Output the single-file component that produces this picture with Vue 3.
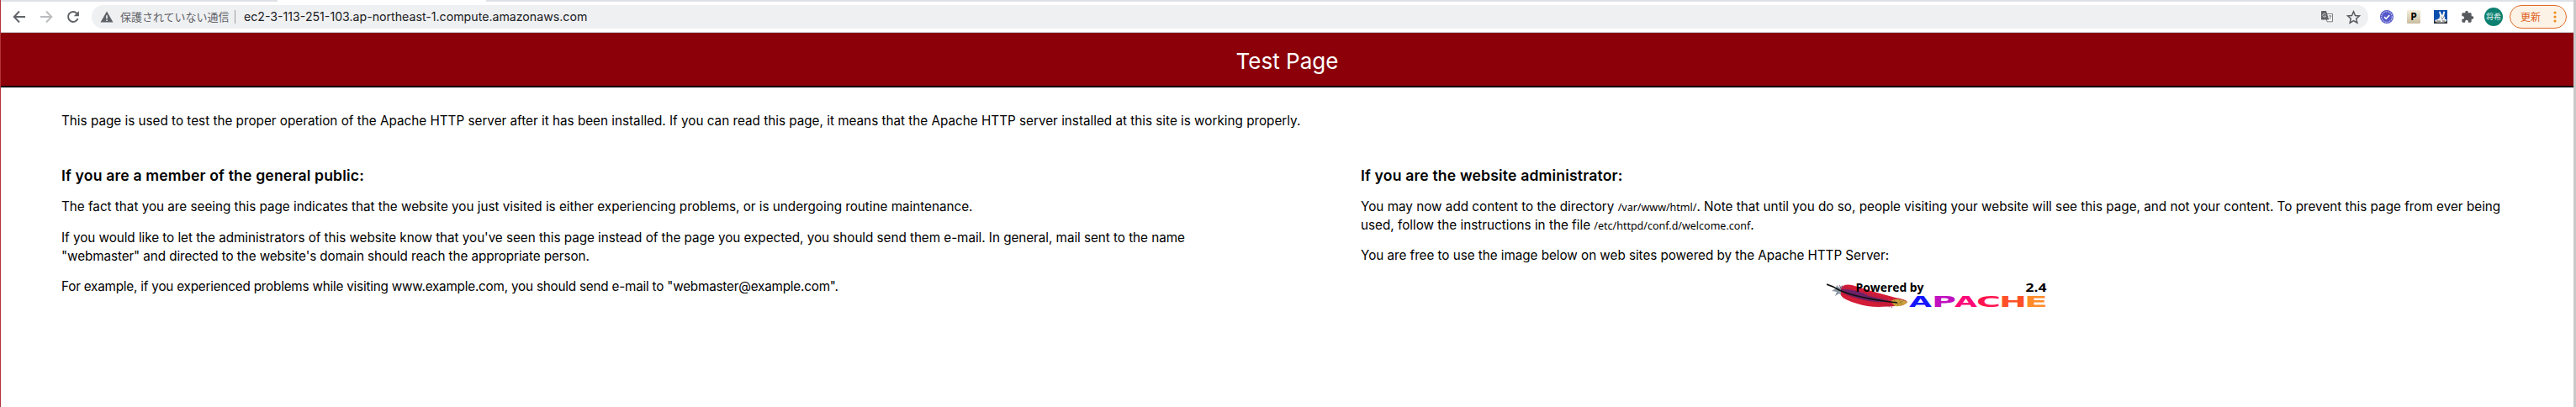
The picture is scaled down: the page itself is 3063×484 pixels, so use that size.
<script setup>
const letters = [
  { c: 'A', x: 98, w: 27, fill: '#1414ff' },
  { c: 'P', x: 125, w: 29, fill: '#c010c0' },
  { c: 'A', x: 152, w: 27, fill: '#ff0a78' },
  { c: 'C', x: 178, w: 29, fill: '#ff1450' },
  { c: 'H', x: 205, w: 33, fill: '#ff5028' },
  { c: 'E', x: 235, w: 28, fill: '#ff8c28' },
]
const barbs = Array.from({ length: 19 }, (_, i) => {
  const x = 18 + i * 3.1
  const y = 10 + i * 0.85
  return { up: `M${x} ${y}l-3 -5`, down: `M${x} ${y}l4 7` }
})
</script>

<template>
  <div class="window">
    <div class="tabs"><div class="active-tab"></div></div>
    <div class="toolbar">
      <svg class="nav" viewBox="0 0 16 16"><path d="M15 8H2M8 1.5L1.7 8L8 14.5" fill="none" stroke="#5f6368" stroke-width="1.9" /></svg>
      <svg class="nav" viewBox="0 0 16 16"><path d="M1 8h13M8 1.5L14.3 8L8 14.5" fill="none" stroke="#bbbcbe" stroke-width="1.9" /></svg>
      <svg class="nav" viewBox="0 0 16 16"><path d="M13.6 10.2A6 6 0 1 1 12.4 3.8L14 5.6" fill="none" stroke="#5f6368" stroke-width="1.9" /><path d="M14.9 1v6.2H8.7z" fill="#5f6368" /></svg>
      <div class="address">
        <svg class="warn" viewBox="0 0 16 14"><path d="M8 .5L15.5 13.5H.5z" fill="#5f6368" /><path d="M8 5.2v4M8 10.4v1.7" stroke="#eff0f2" stroke-width="1.6" /></svg>
        <span class="insecure">保護されていない通信</span>
        <i class="sep"></i>
        <span class="url">ec2-3-113-251-103.ap-northeast-1.compute.amazonaws.com</span>
        <svg class="translate" viewBox="0 0 16 16">
          <path d="M6 4.5h8.5v9.3H8z" fill="#fff" stroke="#7a7e82" stroke-width="1" />
          <path d="M1.5 1H7l3.3 10.5H1.5Q1 11.500 1 11V1.500Q1 1 1.500 1z" fill="#5f6368" />
          <path d="M6.500 5A2 2 0 1 0 6.700 7H5" fill="none" stroke="#d8dadc" stroke-width=".9" />
          <path d="M9.500 7h4M11.500 6v1M12.800 7q-.8 2.500-2.200 3.500M11 8.500q.8 1.800 2 2.800" fill="none" stroke="#6f7377" stroke-width=".8" />
        </svg>
        <svg class="star" viewBox="0 0 16 16"><path d="M8 1.700l1.900 4.400 4.700.4-3.600 3.100 1.100 4.700L8 11.800l-4.100 2.500L5 9.600 1.400 6.500l4.700-.4z" fill="none" stroke="#55595d" stroke-width="1.400" /></svg>
      </div>
      <div class="extensions">
        <svg viewBox="0 0 16 16"><circle cx="8" cy="8" r="8" fill="#5558c8" /><circle cx="8" cy="8" r="6.300" fill="none" stroke="#c5c7f3" stroke-width="1.100" stroke-dasharray="1.700 .8" /><path d="M5 8.200l2.200 2.100L11.200 6" fill="none" stroke="#fff" stroke-width="1.600" /></svg>
        <span class="p-ext">P</span>
        <svg viewBox="0 0 16 16">
          <path d="M0 0h16v16H0z" fill="#0b4fae" />
          <path d="M0 12.500h16V16H0z" fill="#30353a" />
          <path d="M7.300 7L6.100 2.500Q6.500.8 7.800 1.800L9.300 5.500 10.300 5.500 11.300 1.800Q12.800.8 13.100 2.500L12.200 7Q13.600 8.500 12.900 10.500 15.500 10.500 15.200 12.500 14.500 14.500 11.500 14.500H4.500Q1 14.300 1.500 12.300 2 11 4.200 11.300 5 9.800 6.600 10 6.200 8 7.300 7z" fill="#f2f2ef" />
          <path d="M8.500 8.200h.9M11 8.200h.9M9 10.300h2M3 13l5 .2M10 13h3.500" stroke="#333" stroke-width=".8" fill="none" />
        </svg>
        <svg viewBox="0 0 24 24"><path d="M20.500 11H19V7c0-1.100-.9-2-2-2h-4V3.500a2.500 2.500 0 0 0-5 0V5H4c-1.100 0-2 .9-2 2v3.800h1.500a2.700 2.700 0 0 1 0 5.400H2V20c0 1.100.9 2 2 2h3.800v-1.500a2.700 2.700 0 0 1 5.400 0V22H17c1.100 0 2-.9 2-2v-4h1.500a2.500 2.500 0 0 0 0-5z" fill="#55595d" /></svg>
      </div>
      <div class="avatar">将希</div>
      <div class="update"><span>更新</span><svg viewBox="0 0 4 14"><g fill="#f08a1c"><circle cx="2" cy="2" r="1.600" /><circle cx="2" cy="7" r="1.600" /><circle cx="2" cy="12" r="1.600" /></g></svg></div>
    </div>
    <header><h1>Test Page</h1></header>
    <main>
      <p class="intro">This page is used to test the proper operation of the Apache HTTP server after it has been installed. If you can read this page, it means that the Apache HTTP server installed at this site is working properly.</p>
      <div class="columns">
        <section>
          <h2>If you are a member of the general public:</h2>
          <p class="snug">The fact that you are seeing this page indicates that the website you just visited is either experiencing problems, or is undergoing routine maintenance.</p>
          <p><span class="tight">If you would like to let the administrators of this website know that you've seen this page instead of the page you expected, you should send them e-mail. In general, mail sent to the name</span><br /><span class="tighter">"webmaster" and directed to the website's domain should reach the appropriate person.</span></p>
          <p class="tightest">For example, if you experienced problems while visiting www.example.com, you should send e-mail to "webmaster@example.com".</p>
        </section>
        <section class="admin">
          <h2>If you are the website administrator:</h2>
          <p>You may now add content to the directory <code>/var/www/html/</code>. Note that until you do so, people visiting your website will see this page, and not your content. To prevent this page from ever being<br />used, follow the instructions in the file <code>/etc/httpd/conf.d/welcome.conf</code>.</p>
          <p class="tight">You are free to use the image below on web sites powered by the Apache HTTP Server:</p>
          <svg class="powered" viewBox="0 -8 264 42">
            <path d="M12 5l3 3 4-3-1 5 1 9-4-4-5 3 2-5-6-1 5-3z" fill="#8b98a4" />
            <path d="M17 10Q19 3 30 5L60 14 82 20Q94 22 96 25 93 30 82 30L62 31Q48 31 36 27 19 22 17 17z" fill="#d21c38" />
            <path d="M17 10Q36 10 50 18L78 25 60 25Q36 23 17 13z" fill="#5c2475" />
            <g fill="none" stroke-width=".7"><g v-for="(b, i) in barbs" :key="i"><path :d="b.up" stroke="#8c1d55" /><path :d="b.down" stroke="#9e1738" /></g></g>
            <path d="M76 24q8-5 20 1-4 6-15 5z" fill="#c9a23e" />
            <path d="M80 23l5 5M86 22l4 6M84 28l8-5" stroke="#71511d" stroke-width=".8" stroke-dasharray="1 1" />
            <path d="M0 4Q7 6 15 11 34 20 84 26" fill="none" stroke="#111" stroke-width="1.700" />
            <text x="34.500" y="12.500" class="label" textLength="81" lengthAdjust="spacingAndGlyphs">Powered by</text>
            <text x="236.500" y="12.500" class="label" textLength="25" lengthAdjust="spacingAndGlyphs">2.4</text>
            <text v-for="l in letters" :key="l.x" :x="l.x" y="30.500" class="apache" :fill="l.fill" :textLength="l.w" lengthAdjust="spacingAndGlyphs">{{ l.c }}</text>
          </svg>
        </section>
      </div>
    </main>
  </div>
</template>

<style>
body { margin: 0; background: #fff; overflow: hidden; }
</style>

<style scoped>
.window { box-sizing: border-box; width: 3063px; height: 484px; border-left: 1px solid #b3333b; border-right: 3px solid #c9c9c9; background: #fff; color: #000; font-family: Inter, "Noto Sans CJK JP", sans-serif; overflow: hidden; }
.tabs { height: 2px; background: #dee1e6; }
.active-tab { width: 177px; height: 2px; margin-left: 329px; background: #fff; width: 248px; }
.toolbar { box-sizing: border-box; height: 37px; border-bottom: 1px solid #c9cccf; display: flex; align-items: center; padding: 0 8px 0 14px; }
.nav { width: 16px; height: 16px; margin-right: 16px; flex: none; }
.address { box-sizing: border-box; margin-left: -2px; width: 2707px; height: 28px; border-radius: 14px; background: #eff0f2; display: flex; align-items: center; padding: 0 9px 0 10px; flex: none; }
.warn { width: 16px; height: 14px; margin-right: 8px; }
.insecure { width: 129px; font: 13px/28px "Noto Sans CJK JP", sans-serif; color: #5f6368; white-space: nowrap; }
.sep { width: 1px; height: 16px; background: #9a9da1; margin: 0 10px 0 7px; }
.url { font-size: 14.170px; padding-bottom: 1px; color: #202124; white-space: nowrap; }
.translate { width: 16px; height: 16px; margin-left: auto; }
.star { width: 17px; height: 17px; margin-left: 15px; }
.extensions { display: flex; gap: 16px; margin-left: 14px; }
.extensions svg, .p-ext { width: 16px; height: 16px; }
.p-ext { background: linear-gradient(#f4efdd, #c9bd9f); border-radius: 1px; font: bold 12px/16px "Open Sans", sans-serif; text-align: center; }
.avatar { width: 22px; height: 22px; margin-left: 12px; border-radius: 50%; background: #0c8070; color: #e5f4f1; font: 9px/22px "Noto Sans CJK JP", sans-serif; text-align: center; }
.update { box-sizing: border-box; width: 68px; height: 28px; margin-left: auto; border: 1px solid #df6d28; border-radius: 14px; background: #fcf2e6; color: #dc6018; display: flex; align-items: center; padding: 0 11px 0 12px; font: 12px/26px "Noto Sans CJK JP", sans-serif; }
.update svg { width: 4px; height: 14px; margin-left: auto; }
header { box-sizing: border-box; height: 65px; background: #8b0009; border-bottom: 2px solid #000; }
h1 { margin: 0; font-size: 26px; line-height: 67px; font-weight: 400; color: #fff; text-align: center; }
main { padding: 29px 72px 0; font-size: 15.250px; line-height: 22px; white-space: nowrap; }
p { margin: 0 0 14.600px; }
.intro { margin: 0; }
.columns { display: grid; grid-template-columns: 1545px 1fr; margin-top: 41px; }
h2 { margin: 0 0 13px; font-size: 17.600px; line-height: 26px; font-weight: 600; letter-spacing: .160px; }
.snug { letter-spacing: -.015px; }
.tight { letter-spacing: -.040px; }
.tighter { letter-spacing: -.090px; }
.tightest { letter-spacing: -.205px; }
.admin p { margin-bottom: 14px; }
code { font-family: "Noto Sans", sans-serif; font-size: 12.500px; line-height: 1; }
.powered { display: block; width: 264px; height: 42px; margin: -3px 0 0 554px; }
.label { font: bold 14.500px "Open Sans", sans-serif; }
.apache { font: bold 18px "DejaVu Sans", sans-serif; }
</style>
